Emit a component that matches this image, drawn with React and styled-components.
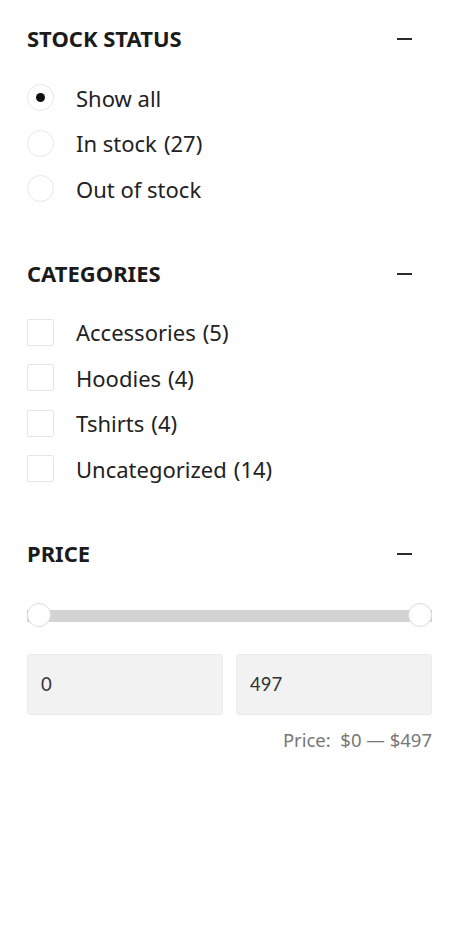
import React from "react";
import styled, { createGlobalStyle } from "styled-components";

const GlobalStyle = createGlobalStyle`
  * { box-sizing: border-box; }
  body {
    margin: 0;
    background: #ffffff;
    font-family: "Noto Sans", "Open Sans", sans-serif;
    color: #222222;
  }
`;

const Sidebar = styled.aside`
  width: 465px;
  padding: 23px 33px 40px 27px;
  display: flex;
  flex-direction: column;
  gap: 46px;
`;

const Section = styled.section`
  display: flex;
  flex-direction: column;
`;

const SectionHeader = styled.div`
  display: flex;
  align-items: center;
  justify-content: space-between;
  height: 30px;
  margin-bottom: ${(p) => p.$gap}px;
`;

const Title = styled.h3`
  margin: 0;
  font-size: 22px;
  line-height: 30px;
  font-weight: 700;
  color: #1b1b1b;
  text-transform: uppercase;
`;

const Toggle = styled.button`
  width: 15px;
  height: 16px;
  margin-right: 20px;
  margin-top: 2px;
  padding: 0;
  border: 0;
  background: transparent;
  display: flex;
  align-items: center;
  justify-content: center;
  cursor: pointer;

  &::before {
    content: "";
    display: block;
    width: 15px;
    height: 2px;
    background: #2a2a2a;
  }
`;

const List = styled.ul`
  list-style: none;
  margin: 0;
  padding: 0;
  display: flex;
  flex-direction: column;
`;

const Item = styled.li`
  height: 45.5px;
  display: flex;
  align-items: center;
  gap: 22px;
  font-size: 22px;
  line-height: 30px;
  color: #222222;
`;

const Radio = styled.span`
  width: 27px;
  height: 27px;
  border-radius: 50%;
  border: 1px solid #e6e6e6;
  flex: none;
  display: flex;
  align-items: center;
  justify-content: center;

  &::after {
    content: "";
    width: 9px;
    height: 9px;
    border-radius: 50%;
    background: ${(p) => (p.$checked ? "#111111" : "transparent")};
  }
`;

const Checkbox = styled.span`
  width: 27px;
  height: 27px;
  border-radius: 2px;
  border: 1px solid #e6e6e6;
  flex: none;
`;

const Count = styled.span`
  margin-left: 7px;
`;

const SliderWrap = styled.div`
  position: relative;
  height: 24px;
  margin-bottom: 27px;
  display: flex;
  align-items: center;
`;

const Track = styled.div`
  flex: 1;
  height: 12px;
  margin-top: 2px;
  background: #d3d3d3;
`;

const Handle = styled.span`
  position: absolute;
  top: 0;
  ${(p) => (p.$side === "left" ? "left: 0;" : "right: 0;")}
  width: 24px;
  height: 24px;
  border-radius: 50%;
  background: #ffffff;
  border: 1px solid #dcdcdc;
`;

const Inputs = styled.div`
  display: grid;
  grid-template-columns: 1fr 1fr;
  gap: 13px;
`;

const PriceInput = styled.input`
  height: 61px;
  width: 100%;
  padding: 0 13px;
  background: #f2f2f2;
  border: 1px solid #ebebeb;
  border-radius: 3px;
  font-family: "Lato", "Noto Sans", sans-serif;
  font-size: 18.5px;
  color: #333333;
  outline: none;
`;

const PriceLabel = styled.div`
  margin-top: 12px;
  text-align: right;
  font-size: 18.5px;
  line-height: 26px;
  color: #777777;
  white-space: pre;
`;

const stock = [
  { label: "Show all", checked: true },
  { label: "In stock", count: 27 },
  { label: "Out of stock" },
];

const categories = [
  { label: "Accessories", count: 5 },
  { label: "Hoodies", count: 4 },
  { label: "Tshirts", count: 4 },
  { label: "Uncategorized", count: 14 },
];

export default function App() {
  return (
    <>
      <GlobalStyle />
      <Sidebar>
        <Section>
          <SectionHeader $gap={22}>
            <Title>Stock status</Title>
            <Toggle aria-label="Collapse" />
          </SectionHeader>
          <List>
            {stock.map((s) => (
              <Item key={s.label}>
                <Radio $checked={s.checked} />
                <span>
                  {s.label}
                  {s.count != null && <Count>({s.count})</Count>}
                </span>
              </Item>
            ))}
          </List>
        </Section>

        <Section>
          <SectionHeader $gap={22}>
            <Title>Categories</Title>
            <Toggle aria-label="Collapse" />
          </SectionHeader>
          <List>
            {categories.map((c) => (
              <Item key={c.label}>
                <Checkbox />
                <span>
                  {c.label}
                  <Count>({c.count})</Count>
                </span>
              </Item>
            ))}
          </List>
        </Section>

        <Section>
          <SectionHeader $gap={35}>
            <Title>Price</Title>
            <Toggle aria-label="Collapse" />
          </SectionHeader>
          <SliderWrap>
            <Track />
            <Handle $side="left" />
            <Handle $side="right" />
          </SliderWrap>
          <Inputs>
            <PriceInput defaultValue="0" />
            <PriceInput defaultValue="497" />
          </Inputs>
          <PriceLabel>{"Price:  $0 — $497"}</PriceLabel>
        </Section>
      </Sidebar>
    </>
  );
}
